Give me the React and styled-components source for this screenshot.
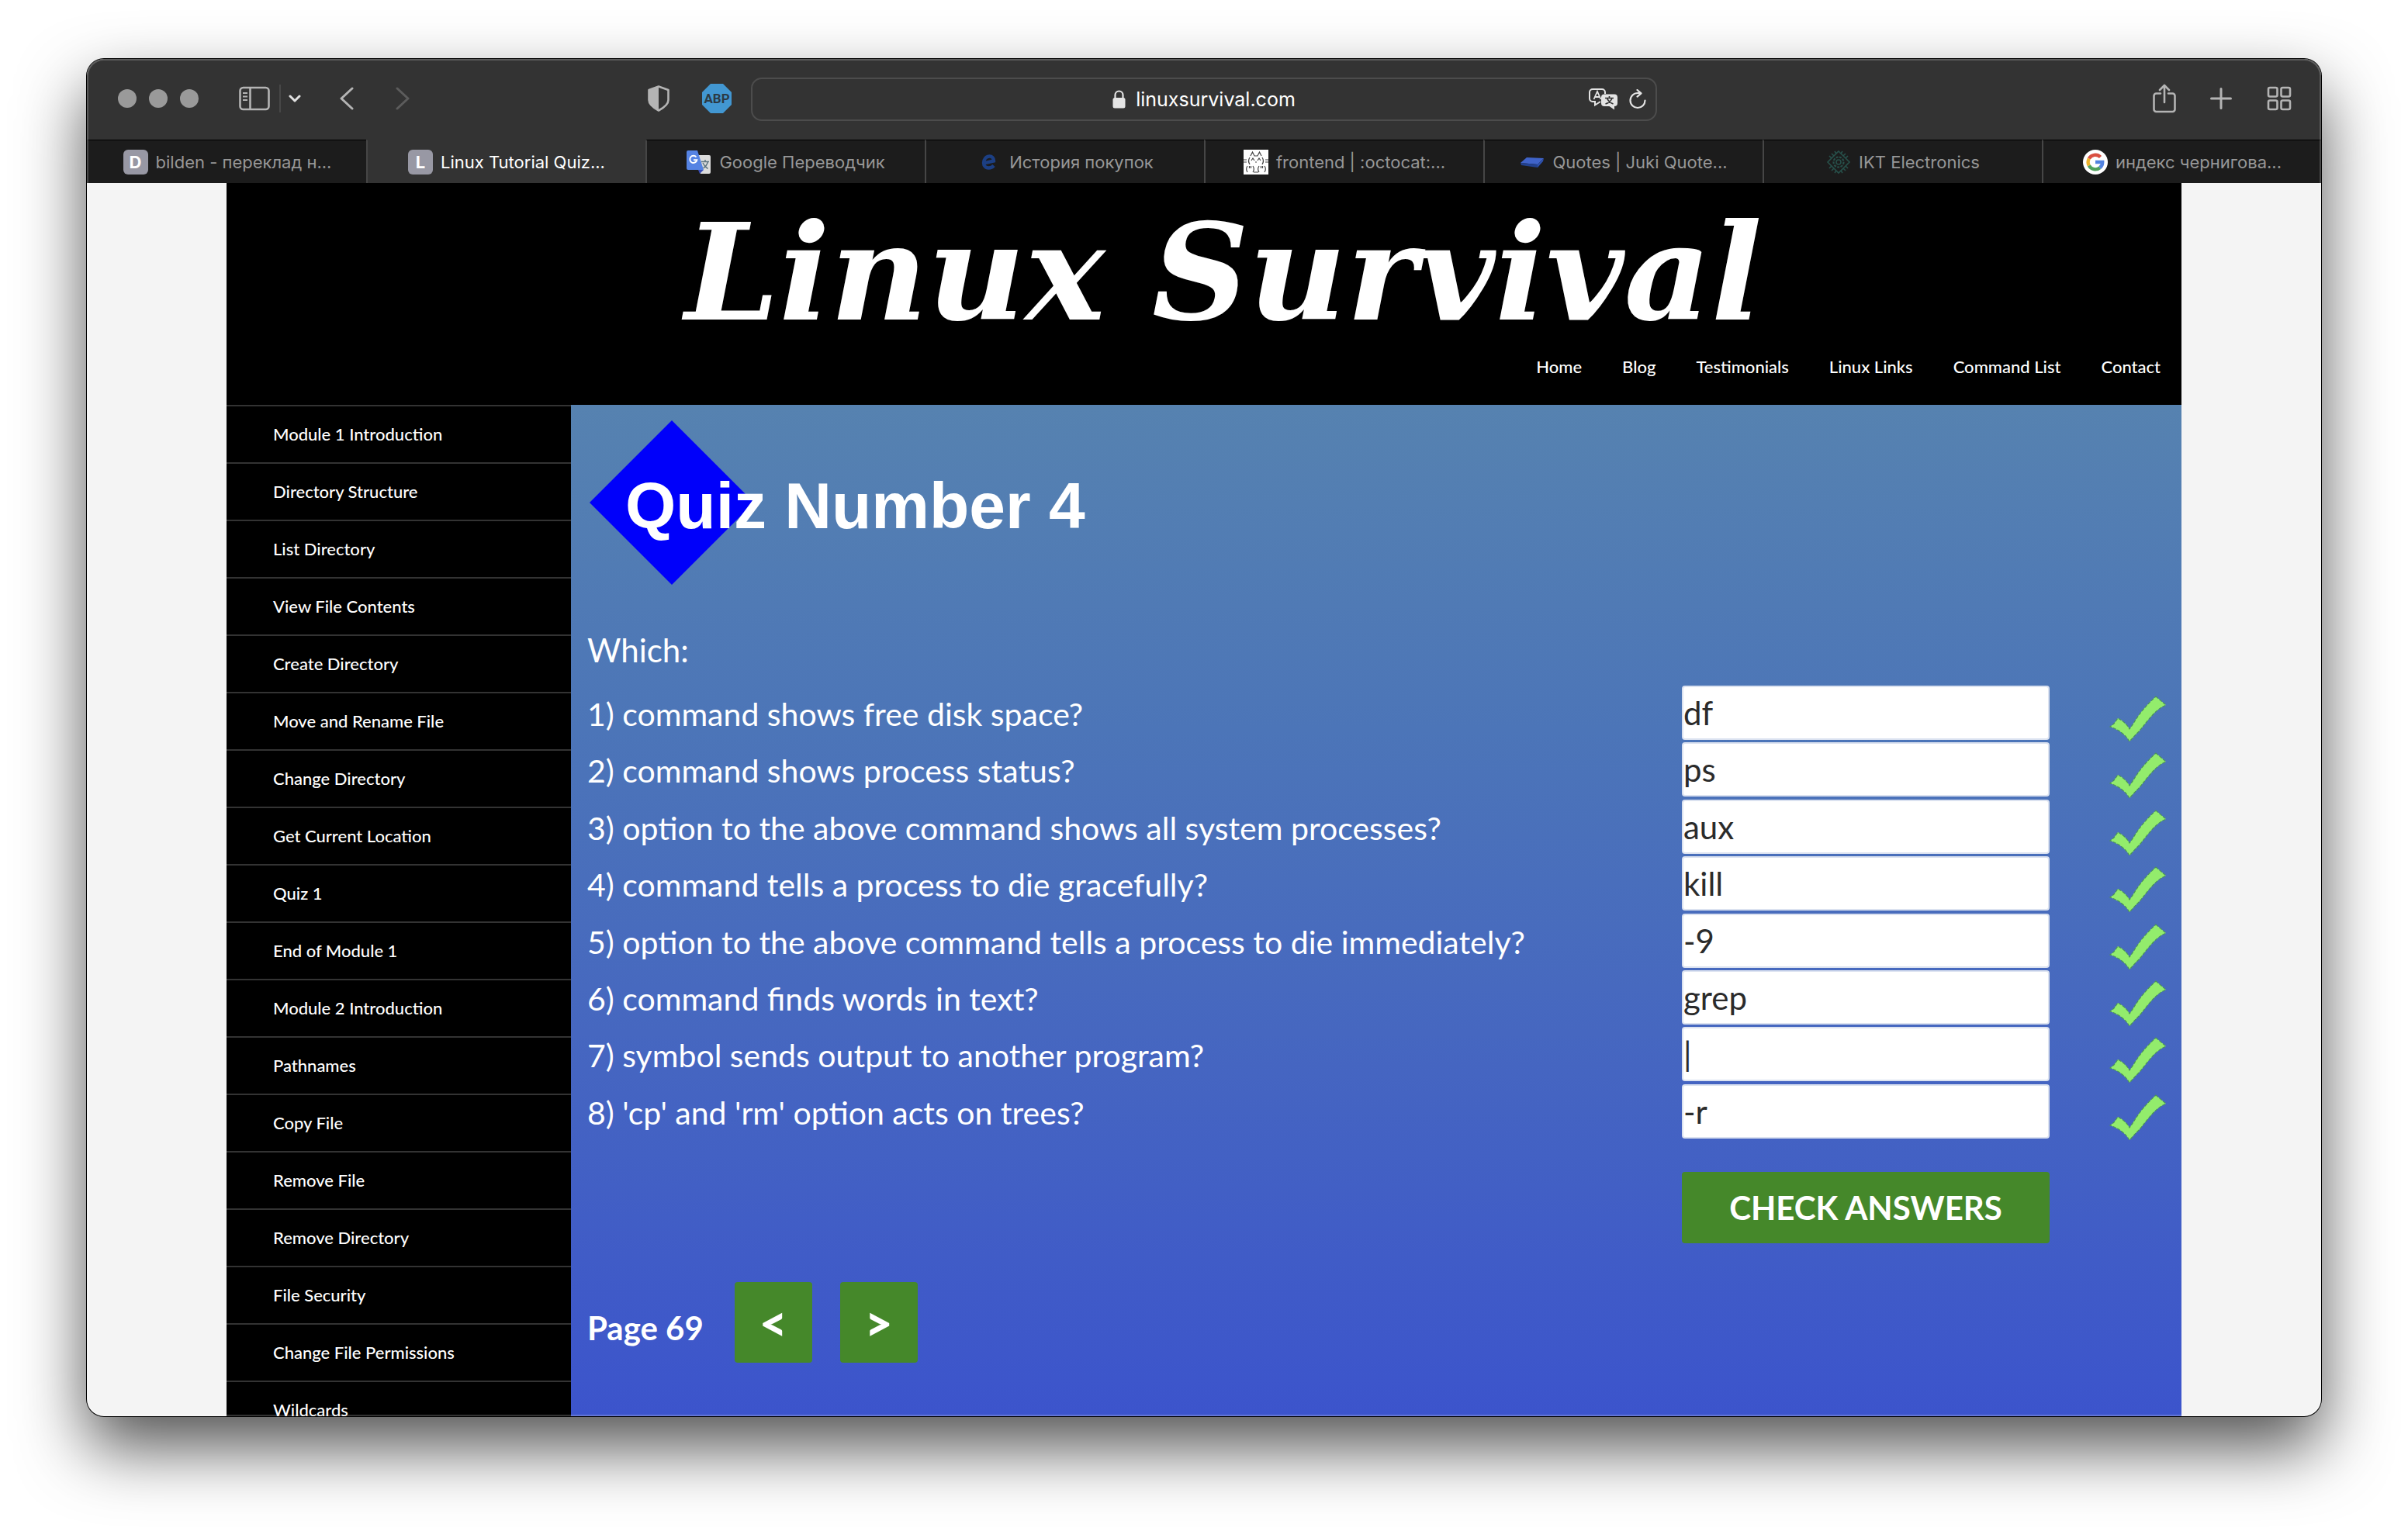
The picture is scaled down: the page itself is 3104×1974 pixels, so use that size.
import React from "react";
import styled, { createGlobalStyle } from "styled-components";

const GlobalStyle = createGlobalStyle`
  * { box-sizing: border-box; }
  body { margin: 0; background: #ffffff; font-family: Lato, "Open Sans", sans-serif; }
  button, input { font-family: inherit; }
  a { color: inherit; text-decoration: none; }
`;

const Desktop = styled.div`
  height: 100vh;
  padding: 76px 112px 148px;
  overflow: hidden;
`;

const BrowserWindow = styled.div`
  height: 100%;
  display: flex;
  flex-direction: column;
  position: relative;
  overflow: hidden;
  border-radius: 22px;
  background: #f4f4f4;
  box-shadow: 0 0 0 1px #000000, 0 40px 86px rgba(0, 0, 0, 0.68);
  &::after {
    content: "";
    position: absolute;
    inset: 0;
    border-radius: 22px;
    border: 2px solid rgba(255, 255, 255, 0.2);
    pointer-events: none;
  }
`;

const Toolbar = styled.div`
  flex: none;
  height: 104px;
  display: grid;
  grid-template-columns: 1fr 1168px 1fr;
  align-items: center;
  background: #333333;
  color: #b4b4b4;
`;

const ToolGroup = styled.div`
  display: flex;
  align-items: center;
  height: 100%;
  padding: 0 ${(p) => p.$right || 0}px 2px ${(p) => p.$left || 0}px;
  justify-content: ${(p) => (p.$end ? "flex-end" : "flex-start")};
`;

const Extensions = styled.div`
  flex: 1;
  display: flex;
  align-items: center;
  justify-content: flex-end;
`;

const Lights = styled.div`
  display: flex;
  gap: 16px;
  margin-right: 52px;
`;

const Light = styled.span`
  width: 24px;
  height: 24px;
  border-radius: 50%;
  background: #9a9a9a;
`;

const IconButton = styled.button`
  border: 0;
  padding: 0;
  background: none;
  color: ${(p) => p.$color || "inherit"};
  display: flex;
  align-items: center;
  justify-content: center;
  margin-left: ${(p) => p.$before || 0}px;
  svg { display: block; }
`;

const ToolDivider = styled.span`
  width: 2px;
  height: 36px;
  margin: 0 10px 0 12px;
  background: #474747;
`;

const AddressBar = styled.div`
  height: 56px;
  display: grid;
  grid-template-columns: 1fr auto 1fr;
  align-items: center;
  border: 2px solid #4c4c4c;
  border-radius: 14px;
  padding: 0 12px 0 12px;
  color: #e4e4e4;
  font: 25px/32px Inter, "Liberation Sans", sans-serif;
`;

const Address = styled.span`
  display: flex;
  align-items: center;
  gap: 13px;
  color: #ffffff;
`;

const AddressTools = styled.div`
  grid-column: 3;
  display: flex;
  justify-content: flex-end;
  align-items: center;
  gap: 14px;
`;

const TabBar = styled.nav`
  flex: none;
  height: 56px;
  display: grid;
  grid-template-columns: repeat(8, minmax(0, 1fr));
`;

const Tab = styled.a`
  display: flex;
  align-items: center;
  justify-content: center;
  gap: 10px;
  border-left: 2px solid ${(p) => (p.$first ? "transparent" : "#464646")};
  border-top: 1px solid ${(p) => (p.$active ? "#333333" : "#000000")};
  background: ${(p) => (p.$active ? "#333333" : "#1c1c1c")};
  color: ${(p) => (p.$active ? "#ffffff" : "#979797")};
  font: 22px/28px Inter, "Liberation Sans", sans-serif;
  white-space: nowrap;
  svg { flex: none; display: block; }
`;

const LetterIcon = styled.span`
  width: 32px;
  height: 32px;
  border-radius: 6px;
  background: #9898a4;
  color: #ffffff;
  font: 700 22px/32px Inter, sans-serif;
  text-align: center;
`;

const Viewport = styled.div`
  flex: 1;
  min-height: 0;
  overflow: hidden;
  display: flex;
  padding: 0 180px;
`;

const Site = styled.div`
  flex: 1;
  display: flex;
  flex-direction: column;
`;

const Header = styled.header`
  flex: none;
  display: flex;
  flex-direction: column;
  height: 286px;
  background: #000000;
  color: #ffffff;
`;

const Brand = styled.h1`
  margin: 0;
  padding: 16px 0 0 50px;
  text-align: center;
  font: italic 700 173px/200px "DejaVu Serif", serif;
`;

const MainMenu = styled.nav`
  display: flex;
  justify-content: flex-end;
  gap: 52px;
  padding: 6px 27px 0 0;
  font-size: 22px;
  font-weight: 500;
  line-height: 30px;
`;

const Body = styled.div`
  flex: 1;
  min-height: 0;
  display: flex;
`;

const Sidebar = styled.nav`
  flex: none;
  width: 444px;
  overflow: hidden;
  background: #000000;
  color: #ffffff;
`;

const ModuleLink = styled.a`
  display: block;
  height: 74px;
  padding: 0 60px;
  border-top: 2px solid #333333;
  font-size: 22px;
  font-weight: 500;
  line-height: 72px;
`;

const Content = styled.main`
  flex: 1;
  min-width: 0;
  padding: 20px 19px 0 21px;
  background: linear-gradient(#5682b0, #4c75b8 32%, #4667c0 62%, #3c54cc);
  color: #ffffff;
`;

const QuizTitle = styled.h2`
  margin: 0 0 0 3px;
  height: 212px;
  display: grid;
  align-items: center;
  font: 700 84px/96px "Liberation Sans", Arial, sans-serif;
  > * { grid-area: 1 / 1; }
  svg { display: block; }
`;

const QuizTitleText = styled.span`
  padding: 8px 0 0 46px;
`;

const Prompt = styled.p`
  margin: 57px 0 19px;
  font-size: 42px;
  line-height: 54px;
`;

const Questions = styled.div`
  display: grid;
  grid-auto-rows: 1fr;
  min-height: 587px;
`;

const Question = styled.div`
  display: grid;
  grid-template-columns: minmax(0, 1fr) 474px 151px;
  align-items: start;
`;

const QuestionLabel = styled.label`
  font-size: 41px;
  line-height: 73px;
`;

const Answer = styled.input`
  width: 100%;
  height: 70px;
  border: 2px solid #dbe2f0;
  border-radius: 4px;
  padding: 0;
  background: #ffffff;
  color: #2b2b2b;
  font-size: 42px;
`;

const Mark = styled.span`
  display: flex;
  justify-content: flex-end;
  padding-top: 12px;
`;

const CheckRow = styled.div`
  display: grid;
  grid-template-columns: minmax(0, 1fr) 474px 151px;
  margin-top: 40px;
`;

const GreenButton = styled.button`
  border: 0;
  border-radius: 4px;
  background: #45882a;
  color: #ffffff;
  font-weight: 700;
  padding: 0;
`;

const CheckButton = styled(GreenButton)`
  grid-column: 2;
  height: 92px;
  font-size: 42px;
`;

const Pager = styled.div`
  display: flex;
  align-items: center;
  margin-top: 50px;
  font-size: 42px;
  font-weight: 700;
`;

const PageNumber = styled.span`
  padding-top: 14px;
  margin-right: 40px;
`;

const StepButton = styled(GreenButton)`
  width: 100px;
  height: 104px;
  margin-right: 36px;
  font-size: 62px;
  font-weight: 900;
`;

const SidebarIcon = () => (
  <svg width="40" height="32" viewBox="0 0 40 32" fill="none" stroke="currentColor" strokeWidth="2.6">
    <rect x="1.5" y="2" width="37" height="28" rx="4" />
    <path d="M14.5 2v28" />
    <path d="M5 9h6M5 13.500h6M5 18h6" strokeWidth="2" />
  </svg>
);

const ChevronDown = () => (
  <svg width="16" height="12" viewBox="0 0 16 12" fill="none" stroke="currentColor" strokeWidth="3" strokeLinecap="round" strokeLinejoin="round">
    <path d="M2 3l6 6 6-6" />
  </svg>
);

const Chevron = ({ flip }) => (
  <svg width="18" height="30" viewBox="0 0 18 30" fill="none" stroke="currentColor" strokeWidth="3" strokeLinecap="round" strokeLinejoin="round">
    <path d={flip ? "M2 2l14 13L2 28" : "M16 2L2 15l14 13"} />
  </svg>
);

const ShieldIcon = () => (
  <svg width="28" height="34" viewBox="0 0 28 34">
    <path d="M14 1.500L26.500 6v13c0 6-6 10-12.500 13.500C7.500 29 1.500 25 1.500 19V6z" fill="none" stroke="currentColor" strokeWidth="2.600" strokeLinejoin="round" />
    <path d="M14 1.500v31C7.500 29 1.500 25 1.500 19V6z" fill="currentColor" />
  </svg>
);

const AbpIcon = () => (
  <svg width="38" height="38" viewBox="0 0 38 38">
    <path d="M11 0h16l11 11v16L27 38H11L0 27V11z" fill="#4297d2" />
    <text x="19" y="25" textAnchor="middle" fontFamily="Roboto, sans-serif" fontWeight="700" fontSize="17" fill="#2c3a44">ABP</text>
  </svg>
);

const LockIcon = () => (
  <svg width="17" height="24" viewBox="0 0 17 24">
    <rect x="0.500" y="10" width="16" height="13.500" rx="2.500" fill="#e4e4e4" />
    <path d="M3.500 11V6.500a5 5 0 0 1 10 0V11" fill="none" stroke="#e4e4e4" strokeWidth="2.200" />
  </svg>
);

const TranslateIcon = () => (
  <svg width="38" height="28" viewBox="0 0 38 28" fill="none">
    <path d="M15 17l-7 4.500v-4.500H5a4 4 0 0 1-4-4V5a4 4 0 0 1 4-4h12a4 4 0 0 1 4 4v2" stroke="currentColor" strokeWidth="2" />
    <path d="M6.500 14L11 4l4.500 10M8 11h6" stroke="currentColor" strokeWidth="1.800" />
    <path d="M20 7.500h13a4 4 0 0 1 4 4V19a4 4 0 0 1-4 4v4.500L26.500 23H20a4 4 0 0 1-4-4v-7.500a4 4 0 0 1 4-4z" fill="currentColor" />
    <path d="M21 12.500h11M26.500 10v2.500M30 12.500c-1 3-4 6-8.500 7.500M23.500 12.500c1 3 4 6 8 7.500" stroke="#333333" strokeWidth="1.700" />
  </svg>
);

const ReloadIcon = () => (
  <svg width="22" height="26" viewBox="0 0 22 26" fill="none" stroke="currentColor" strokeWidth="2.200" strokeLinecap="round" strokeLinejoin="round">
    <path d="M20.500 14.500A9.500 9.500 0 1 1 11 5h4" />
    <path d="M10.500 1l5 4.300-5 4.300" />
  </svg>
);

const ShareIcon = () => (
  <svg width="30" height="38" viewBox="0 0 30 38" fill="none" stroke="currentColor" strokeWidth="2.600" strokeLinecap="round" strokeLinejoin="round">
    <path d="M10 12.500H4.500a3 3 0 0 0-3 3V33a3 3 0 0 0 3 3h21a3 3 0 0 0 3-3V15.500a3 3 0 0 0-3-3H20" />
    <path d="M15 24V2M9 8l6-6 6 6" />
  </svg>
);

const PlusIcon = () => (
  <svg width="28" height="28" viewBox="0 0 28 28" stroke="currentColor" strokeWidth="3" strokeLinecap="round">
    <path d="M14 1.500v25M1.500 14h25" />
  </svg>
);

const GridIcon = () => (
  <svg width="32" height="32" viewBox="0 0 32 32" fill="none" stroke="currentColor" strokeWidth="2.600">
    <rect x="2" y="2" width="11.500" height="11.500" rx="2" />
    <rect x="18.500" y="2" width="11.500" height="11.500" rx="2" />
    <rect x="2" y="18.500" width="11.500" height="11.500" rx="2" />
    <rect x="18.500" y="18.500" width="11.500" height="11.500" rx="2" />
  </svg>
);

const GoogleTranslateFavicon = () => (
  <svg width="32" height="32" viewBox="0 0 32 32">
    <path d="M11 7h18a2 2 0 0 1 2 2v20a2 2 0 0 1-2 2H18z" fill="#dcdcdc" />
    <path d="M2 1h12l8 25H2a2 2 0 0 1-2-2V3a2 2 0 0 1 2-2z" fill="#5583e3" />
    <path d="M15 26h7l-5 5z" fill="#3a4fb8" />
    <path d="M12.500 9.500a4.600 4.600 0 1 0 .9 3.800H9" fill="none" stroke="#ffffff" strokeWidth="1.900" />
    <path d="M19 15.500h10M24 13v2.500M27.500 15.500c-1 4-4 7-6 8.500M21 17c1.500 3.500 4 6 6.500 7.500" fill="none" stroke="#5d7480" strokeWidth="1.500" />
  </svg>
);

const EFavicon = () => (
  <svg width="32" height="32" viewBox="0 0 32 32">
    <path d="M8.500 17.500L22 14.500c0-4-2.500-6-5.500-6-4.500 0-7.500 4-7.500 8.500s3 6.500 6.500 6.500c3 0 5-1.200 6.500-3" fill="none" stroke="#1c3f83" strokeWidth="4.400" />
  </svg>
);

const OctocatFavicon = () => (
  <svg width="32" height="32" viewBox="0 0 32 32">
    <rect width="32" height="32" fill="#ffffff" />
    <g fill="none" stroke="#444444" strokeWidth="1.200">
      <path d="M9 8l2.500-5L14 8h4l2.500-5L23 8" />
      <path d="M0 13h4M0 16h4M28 13h4M28 16h4M8 10c-2 3-2 6 0 9M24 10c2 3 2 6 0 9M10 14l2-3 2 3M18 14l2-3 2 3M15 16h2" />
      <path d="M5 21c-2 3-2 5 0 8M12 21c2 3 2 5 0 8M20 21c-2 3-2 5 0 8M27 21c2 3 2 5 0 8M7.500 21v3M9.500 21v3M22.500 21v3M24.500 21v3M13 29h6" />
    </g>
  </svg>
);

const QuotesFavicon = () => (
  <svg width="32" height="32" viewBox="0 0 32 32">
    <path d="M9 10l22 1-8 8L1 17z" fill="#3f63c9" />
    <path d="M1 17l22 2v4L2 20z" fill="#22418f" />
    <path d="M23 19l8-8-1 4-7 8z" fill="#2d50ad" />
  </svg>
);

const ChipFavicon = () => (
  <svg width="32" height="32" viewBox="0 0 32 32" fill="none" stroke="#27504a" strokeWidth="1.600">
    <path d="M16 2l14 14-14 14L2 16z" />
    <circle cx="16" cy="16" r="6.500" strokeDasharray="3 1.400" strokeWidth="2.200" />
    <circle cx="16" cy="16" r="3" />
    <path d="M19 5l2-3M22 8l3-3M25 11l3-3M7 11L4 8M10 8L7 5M13 5l-2-3M7 21l-3 3M10 24l-3 3M13 27l-2 3M19 27l2 3M22 24l3 3M25 21l3 3" />
  </svg>
);

const GoogleFavicon = () => (
  <svg width="32" height="32" viewBox="0 0 32 32" fill="none" strokeWidth="4.400">
    <circle cx="16" cy="16" r="16" fill="#ffffff" />
    <path d="M22.500 9.500A9.300 9.300 0 0 0 7.800 11.500" stroke="#d94f41" />
    <path d="M7.800 11.500a9.300 9.300 0 0 0 0 9" stroke="#edb22c" />
    <path d="M7.800 20.500a9.300 9.300 0 0 0 14 2.800" stroke="#4fa25c" />
    <path d="M21.800 23.300a9.300 9.300 0 0 0 3.400-7.300H16" stroke="#5283e0" />
  </svg>
);

const Tick = () => (
  <svg width="74" height="60" viewBox="0 0 74 60" aria-label="correct">
    <path
      d="M60 2l13 11c-9 4-15 10-20 16-8 9-14 18-18 21l-9 10c-3-5-6-8-11-12-4-3-9-5-14-7l5-4 5-7c6 3 12 8 15 14 4-5 7-11 12-18C44 18 51 10 60 2z"
      fill="#93ec6c"
      stroke="#4a9457"
      strokeWidth="1.200"
      strokeDasharray="4 2"
    />
  </svg>
);

const tabs = [
  { title: "bilden - переклад н...", icon: <LetterIcon>D</LetterIcon> },
  { title: "Linux Tutorial Quiz...", icon: <LetterIcon>L</LetterIcon>, active: true },
  { title: "Google Переводчик", icon: <GoogleTranslateFavicon /> },
  { title: "История покупок", icon: <EFavicon /> },
  { title: "frontend | :octocat:...", icon: <OctocatFavicon /> },
  { title: "Quotes | Juki Quote...", icon: <QuotesFavicon /> },
  { title: "IKT Electronics", icon: <ChipFavicon /> },
  { title: "индекс чернигова...", icon: <GoogleFavicon /> },
];

const menu = ["Home", "Blog", "Testimonials", "Linux Links", "Command List", "Contact"];

const modules = [
  "Module 1 Introduction", "Directory Structure", "List Directory", "View File Contents",
  "Create Directory", "Move and Rename File", "Change Directory", "Get Current Location",
  "Quiz 1", "End of Module 1", "Module 2 Introduction", "Pathnames", "Copy File",
  "Remove File", "Remove Directory", "File Security", "Change File Permissions", "Wildcards",
];

const questions = [
  ["1) command shows free disk space?", "df"],
  ["2) command shows process status?", "ps"],
  ["3) option to the above command shows all system processes?", "aux"],
  ["4) command tells a process to die gracefully?", "kill"],
  ["5) option to the above command tells a process to die immediately?", "-9"],
  ["6) command finds words in text?", "grep"],
  ["7) symbol sends output to another program?", "|"],
  ["8) 'cp' and 'rm' option acts on trees?", "-r"],
];

export default function App() {
  return (
    <Desktop>
      <GlobalStyle />
      <BrowserWindow>
        <Toolbar>
          <ToolGroup $left={40} $right={25}>
            <Lights><Light /><Light /><Light /></Lights>
            <IconButton aria-label="Sidebar"><SidebarIcon /></IconButton>
            <ToolDivider />
            <IconButton aria-label="Tab groups" $color="#e2e2e2"><ChevronDown /></IconButton>
            <IconButton aria-label="Back" $before={50}><Chevron /></IconButton>
            <IconButton aria-label="Forward" $before={54} $color="#5c5c5c"><Chevron flip /></IconButton>
            <Extensions>
              <IconButton aria-label="Privacy report"><ShieldIcon /></IconButton>
              <IconButton aria-label="Adblock Plus" $before={42}><AbpIcon /></IconButton>
            </Extensions>
          </ToolGroup>
          <AddressBar>
            <span />
            <Address><LockIcon />linuxsurvival.com</Address>
            <AddressTools>
              <IconButton aria-label="Translate"><TranslateIcon /></IconButton>
              <IconButton aria-label="Reload"><ReloadIcon /></IconButton>
            </AddressTools>
          </AddressBar>
          <ToolGroup $end $right={38}>
            <IconButton aria-label="Share"><ShareIcon /></IconButton>
            <IconButton aria-label="New tab" $before={44}><PlusIcon /></IconButton>
            <IconButton aria-label="Tab overview" $before={45}><GridIcon /></IconButton>
          </ToolGroup>
        </Toolbar>
        <TabBar>
          {tabs.map((tab, i) => (
            <Tab key={tab.title} href="#" $first={i === 0} $active={tab.active}>
              {tab.icon}
              <span>{tab.title}</span>
            </Tab>
          ))}
        </TabBar>
        <Viewport>
          <Site>
            <Header>
              <Brand>Linux Survival</Brand>
              <MainMenu>
                {menu.map((m) => <a key={m} href="#">{m}</a>)}
              </MainMenu>
            </Header>
            <Body>
              <Sidebar>
                {modules.map((m) => <ModuleLink key={m} href="#">{m}</ModuleLink>)}
              </Sidebar>
              <Content>
                <QuizTitle>
                  <svg width="212" height="212" viewBox="0 0 212 212">
                    <path d="M106 0l106 106-106 106L0 106z" fill="#0000fa" />
                  </svg>
                  <QuizTitleText>Quiz Number 4</QuizTitleText>
                </QuizTitle>
                <Prompt>Which:</Prompt>
                <Questions>
                  {questions.map(([text, answer], i) => (
                    <Question key={text}>
                      <QuestionLabel htmlFor={`q${i}`}>{text}</QuestionLabel>
                      <Answer id={`q${i}`} defaultValue={answer} />
                      <Mark><Tick /></Mark>
                    </Question>
                  ))}
                </Questions>
                <CheckRow>
                  <CheckButton>CHECK ANSWERS</CheckButton>
                </CheckRow>
                <Pager>
                  <PageNumber>Page 69</PageNumber>
                  <StepButton aria-label="Previous page">&lt;</StepButton>
                  <StepButton aria-label="Next page">&gt;</StepButton>
                </Pager>
              </Content>
            </Body>
          </Site>
        </Viewport>
      </BrowserWindow>
    </Desktop>
  );
}
